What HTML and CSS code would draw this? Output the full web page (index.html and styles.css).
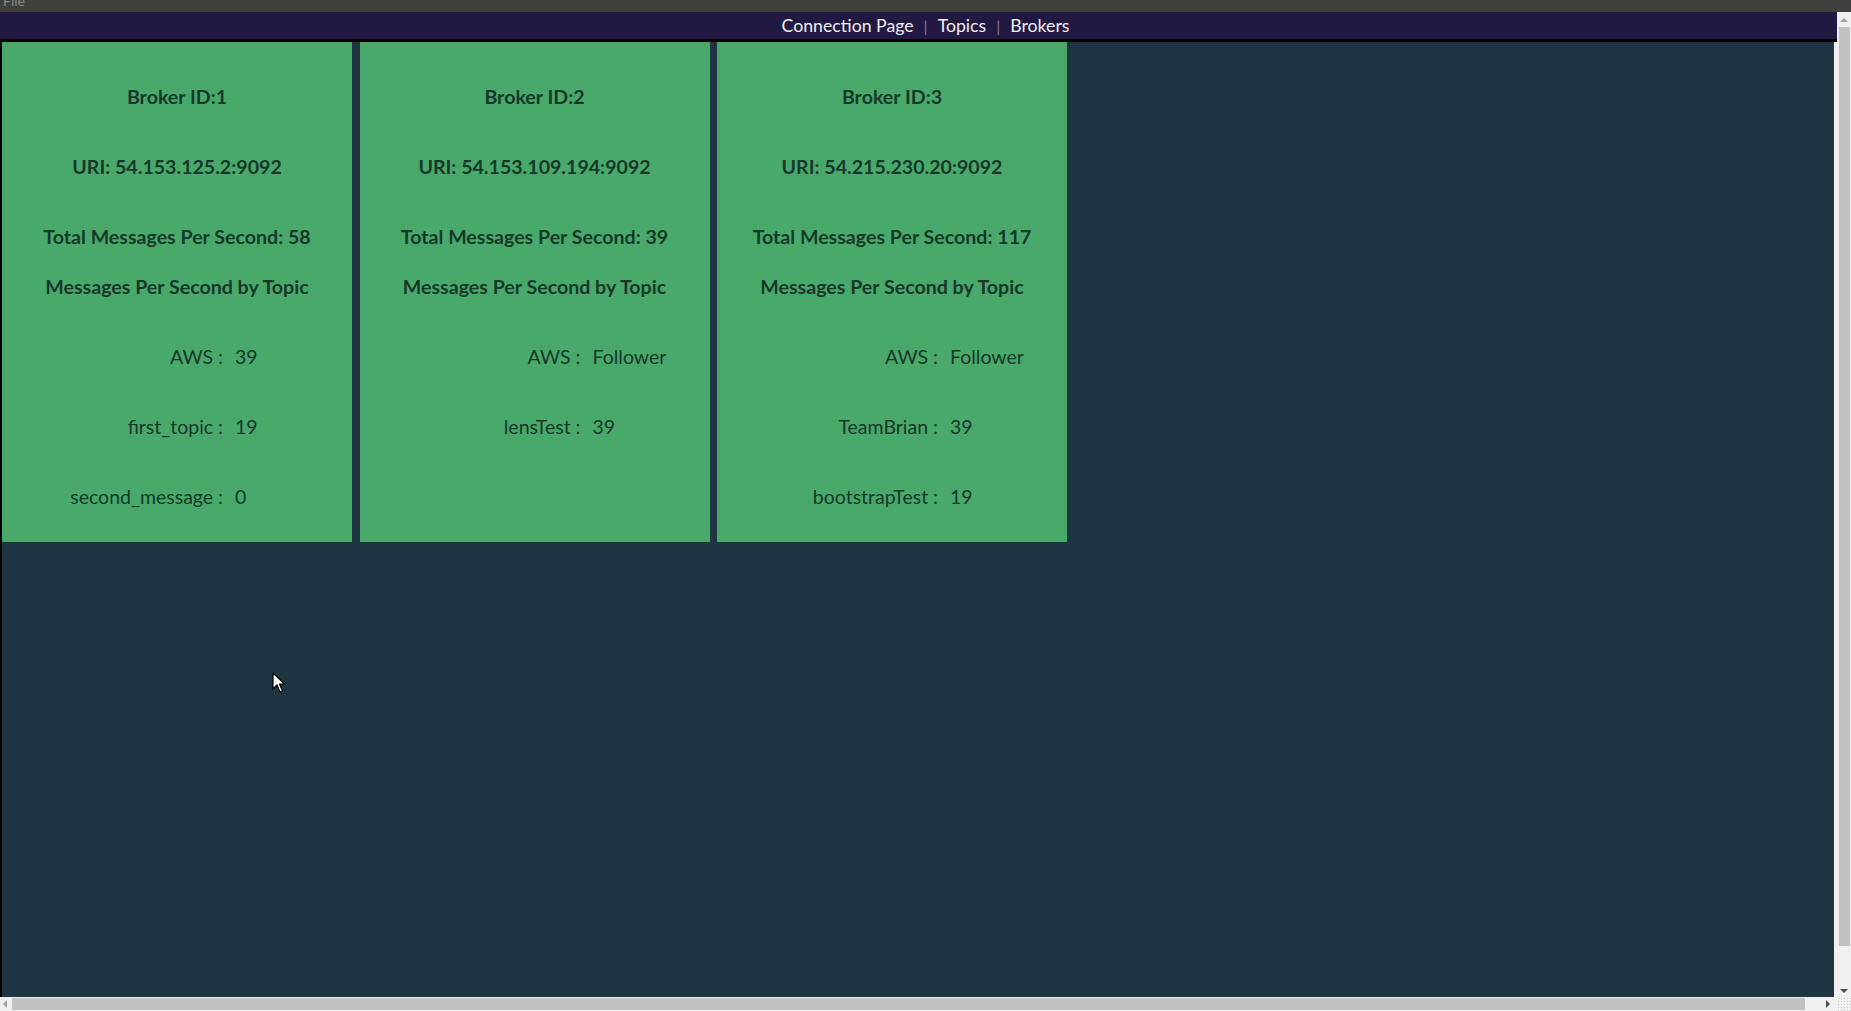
FILE: index.html
```html
<!DOCTYPE html>
<html lang="en">
<head>
<meta charset="utf-8">
<title>Brokers</title>
<link rel="stylesheet" href="styles.css">
</head>
<body>
<div class="window">
  <div class="menubar"><span class="menu-item">File</span></div>
  <div class="viewport">
    <div class="page">
      <nav class="nav">
        <a class="nav-link">Connection Page</a>
        <span class="nav-sep">|</span>
        <a class="nav-link">Topics</a>
        <span class="nav-sep">|</span>
        <a class="nav-link">Brokers</a>
      </nav>
      <main class="content">
        <section class="card">
          <h2 class="card-line">Broker ID:1</h2>
          <p class="card-line">URI: 54.153.125.2:9092</p>
          <p class="card-line">Total Messages Per Second: 58</p>
          <p class="card-line card-sub">Messages Per Second by Topic</p>
          <div class="topic"><span class="topic-name">AWS :</span><span class="topic-val">39</span></div>
          <div class="topic"><span class="topic-name">first_topic :</span><span class="topic-val">19</span></div>
          <div class="topic"><span class="topic-name">second_message :</span><span class="topic-val">0</span></div>
        </section>
        <section class="card">
          <h2 class="card-line">Broker ID:2</h2>
          <p class="card-line">URI: 54.153.109.194:9092</p>
          <p class="card-line">Total Messages Per Second: 39</p>
          <p class="card-line card-sub">Messages Per Second by Topic</p>
          <div class="topic"><span class="topic-name">AWS :</span><span class="topic-val">Follower</span></div>
          <div class="topic"><span class="topic-name">lensTest :</span><span class="topic-val">39</span></div>
          <div class="topic topic-empty"></div>
        </section>
        <section class="card">
          <h2 class="card-line">Broker ID:3</h2>
          <p class="card-line">URI: 54.215.230.20:9092</p>
          <p class="card-line">Total Messages Per Second: 117</p>
          <p class="card-line card-sub">Messages Per Second by Topic</p>
          <div class="topic"><span class="topic-name">AWS :</span><span class="topic-val">Follower</span></div>
          <div class="topic"><span class="topic-name">TeamBrian :</span><span class="topic-val">39</span></div>
          <div class="topic"><span class="topic-name">bootstrapTest :</span><span class="topic-val">19</span></div>
        </section>
      </main>
    </div>
    <div class="vscroll">
      <span class="arrow arrow-up"></span>
      <span class="vthumb"></span>
      <span class="arrow arrow-down"></span>
    </div>
    <div class="hscroll">
      <span class="arrow arrow-left"></span>
      <span class="hthumb"></span>
      <span class="arrow arrow-right"></span>
    </div>
    <div class="corner"></div>
  </div>
  <svg class="cursor" width="14" height="22" viewBox="0 0 14 22">
    <path d="M1 1 L1 17 L5 13 L8 20 L10.5 19 L7.5 12 L12.5 12 Z" fill="#fff" stroke="#000" stroke-width="1.2" stroke-linejoin="round"/>
  </svg>
</div>
</body>
</html>
```

FILE: styles.css
```css
* { box-sizing: border-box; }
html, body { margin: 0; padding: 0; height: 100%; overflow: hidden; }
body { font-family: Lato, "Open Sans", sans-serif; background: #3f3f3b; }

.window { position: relative; width: 1851px; height: 1011px; display: flex; flex-direction: column; }

.menubar { height: 12px; background: #3f3f3b; overflow: hidden; padding-left: 3px; }
.menu-item { display: block; font-size: 14px; line-height: 14px; margin-top: -6px; color: #8b8b86; }

.viewport { flex: 1; display: grid; grid-template-columns: 1fr 14px; grid-template-rows: 1fr 14px; min-height: 0; }

.page { display: flex; flex-direction: column; min-width: 0; min-height: 0; background: #f0f0f0; }

.nav { height: 30px; background: #211942; border-bottom: 3px solid #000; display: flex; justify-content: center; align-items: center; gap: 10px; padding-left: 14px; font-size: 17.7px; line-height: 27px; color: #f1eff6; }
.nav-link { color: #f1eff6; }
.nav-sep { color: #8c7592; font-size: 16px; }

.content { flex: 1; background: #1f3544; border-left: 2px solid #000; margin-right: 3px; display: flex; align-items: flex-start; gap: 7.5px; }

.card { width: 350px; background: #49a96b; color: #16382a; text-align: center; padding: 43px 0 33px; font-size: 19.5px; }
.card-line { margin: 46px 0 0; font-size: 19.6px; font-weight: 700; line-height: 24px; }
.card-line:first-child { margin-top: 0; }
.card-sub { margin-top: 26px; }

.topic { display: grid; grid-template-columns: 221px 1fr; margin-top: 46px; line-height: 24px; height: 24px; }
.topic:nth-of-type(1) { margin-top: 46px; }
.topic-name { text-align: right; }
.topic-val { text-align: left; padding-left: 12px; }

.vscroll { grid-row: 1; grid-column: 2; background: #f0f0f0; display: flex; flex-direction: column; align-items: center; }
.hscroll { grid-row: 2; grid-column: 1; background: #f0f0f0; display: flex; align-items: center; }
.corner { grid-row: 2; grid-column: 2; background: #f0f0f0; background-image: radial-gradient(#c8c8c8 0.8px, transparent 1px); background-size: 3px 3px; }

.vthumb { flex: 1; width: 11px; margin: 0 0 0 1px; background: #c1c1c1; }
.hthumb { height: 12px; width: 1793px; background: #c1c1c1; }

.arrow { display: block; width: 0; height: 0; }
.arrow-up { margin: 6px 0 5px; border-left: 4px solid transparent; border-right: 4px solid transparent; border-bottom: 4px solid #a3a3a3; }
.arrow-down { margin: 43px 0 4px; border-left: 4px solid transparent; border-right: 4px solid transparent; border-top: 4px solid #505050; }
.arrow-left { margin: 0 5px 0 3px; border-top: 4px solid transparent; border-bottom: 4px solid transparent; border-right: 4px solid #a3a3a3; }
.arrow-right { margin: 0 0 0 21px; border-top: 4px solid transparent; border-bottom: 4px solid transparent; border-left: 4px solid #505050; }

.cursor { position: absolute; left: 272px; top: 672px; }
```
